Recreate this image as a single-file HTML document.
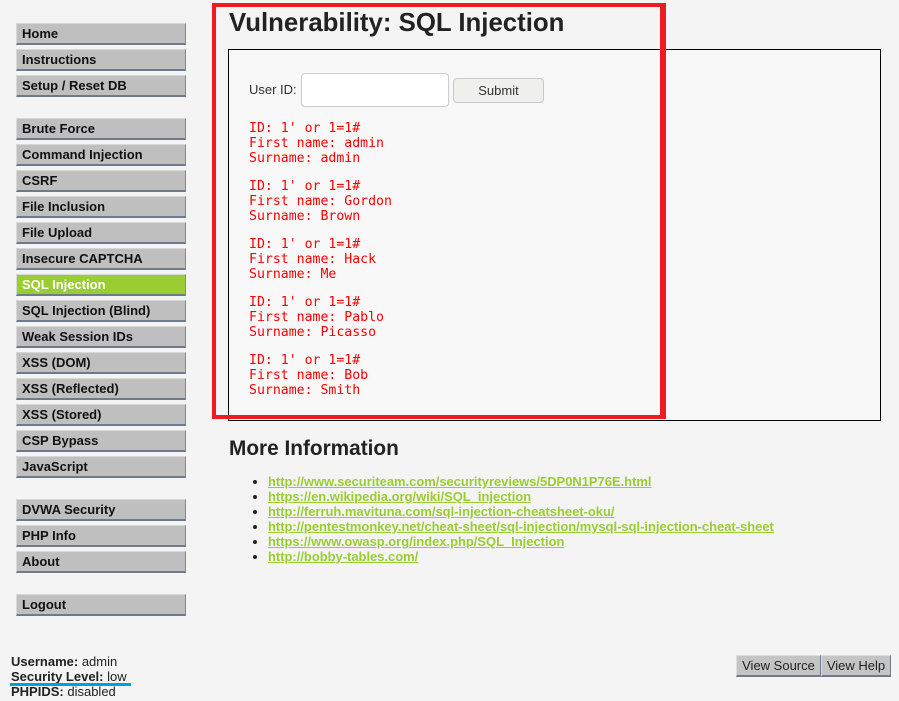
<!DOCTYPE html>
<html><head><meta charset="utf-8"><style>
*{margin:0;padding:0;box-sizing:border-box}
body{width:899px;height:701px;background:#f4f4f4;font-family:"Liberation Sans",sans-serif;position:relative;overflow:hidden;color:#333}
.m{position:absolute;left:16px;width:170px;height:22px;background:#bfbfbf;border:1px solid #d8d8d8;border-right-color:#888;border-bottom:2px solid #6d7b8d;font-weight:bold;font-size:13px;line-height:19px;padding-left:5px;color:#111}
.m.a{background:#9acd32;color:#fff}
.box{position:absolute;left:228px;top:49px;width:653px;height:372px;border:1px solid #000;background:#f7f8f7}
.red{position:absolute;left:212px;top:3px;width:454px;height:416px;border:4px solid #ed1c24;border-right-width:6px}
h1{position:absolute;left:229px;top:9px;font-size:25.8px;font-weight:bold;color:#222}
pre{position:absolute;left:249px;font-family:"DejaVu Sans Mono",monospace;font-size:13.2px;line-height:15px;color:#f00}
h2{position:absolute;left:229px;top:437px;font-size:20.8px;font-weight:bold;color:#222}
ul{position:absolute;left:268px;top:474px;font-size:12.95px;line-height:15px;font-weight:bold}
li{color:#222}
li a{color:#9acd32;text-decoration:underline}
.f{position:absolute;left:11px;font-size:13px;color:#222}
.vb{position:absolute;top:655px;height:22px;background:#c4c4c4;border:1px solid #ddd;border-right-color:#6d7b8d;border-bottom:2px solid #6d7b8d;font-size:13px;line-height:19px;text-align:center;color:#222}
</style></head><body>
<div class="m" style="top:23px">Home</div>
<div class="m" style="top:49px">Instructions</div>
<div class="m" style="top:75px">Setup / Reset DB</div>
<div class="m" style="top:118px">Brute Force</div>
<div class="m" style="top:144px">Command Injection</div>
<div class="m" style="top:170px">CSRF</div>
<div class="m" style="top:196px">File Inclusion</div>
<div class="m" style="top:222px">File Upload</div>
<div class="m" style="top:248px">Insecure CAPTCHA</div>
<div class="m a" style="top:274px">SQL Injection</div>
<div class="m" style="top:300px">SQL Injection (Blind)</div>
<div class="m" style="top:326px">Weak Session IDs</div>
<div class="m" style="top:352px">XSS (DOM)</div>
<div class="m" style="top:378px">XSS (Reflected)</div>
<div class="m" style="top:404px">XSS (Stored)</div>
<div class="m" style="top:430px">CSP Bypass</div>
<div class="m" style="top:456px">JavaScript</div>
<div class="m" style="top:499px">DVWA Security</div>
<div class="m" style="top:525px">PHP Info</div>
<div class="m" style="top:551px">About</div>
<div class="m" style="top:594px">Logout</div>

<div class="box"></div>
<h1>Vulnerability: SQL Injection</h1>
<div style="position:absolute;left:249px;top:82px;font-size:13px;color:#333">User ID:</div>
<div style="position:absolute;left:301px;top:73px;width:148px;height:34px;background:#fff;border:1px solid #ccc;border-radius:4px"></div>
<div style="position:absolute;left:453px;top:78px;width:91px;height:25px;background:#efefed;border:1px solid #c8c8c8;border-radius:4px;font-size:13px;line-height:23px;text-align:center;color:#333">Submit</div>
<pre style="top:121px">ID: 1' or 1=1#
First name: admin
Surname: admin</pre>
<pre style="top:179px">ID: 1' or 1=1#
First name: Gordon
Surname: Brown</pre>
<pre style="top:237px">ID: 1' or 1=1#
First name: Hack
Surname: Me</pre>
<pre style="top:295px">ID: 1' or 1=1#
First name: Pablo
Surname: Picasso</pre>
<pre style="top:353px">ID: 1' or 1=1#
First name: Bob
Surname: Smith</pre>
<div class="red"></div>

<h2>More Information</h2>
<ul>
<li><a>http://www.securiteam.com/securityreviews/5DP0N1P76E.html</a></li>
<li><a>https://en.wikipedia.org/wiki/SQL_injection</a></li>
<li><a>http://ferruh.mavituna.com/sql-injection-cheatsheet-oku/</a></li>
<li><a>http://pentestmonkey.net/cheat-sheet/sql-injection/mysql-sql-injection-cheat-sheet</a></li>
<li><a>https://www.owasp.org/index.php/SQL_Injection</a></li>
<li><a>http://bobby-tables.com/</a></li>
</ul>

<div class="f" style="top:654px"><b>Username:</b> admin</div>
<div class="f" style="top:669px"><b>Security Level:</b> low</div>
<div style="position:absolute;left:10px;top:683px;width:121px;height:3px;background:#00a0e0"></div>
<div class="f" style="top:684px"><b>PHPIDS:</b> disabled</div>
<div class="vb" style="left:736px;width:85px">View Source</div>
<div class="vb" style="left:821px;width:70px">View Help</div>
</body></html>
